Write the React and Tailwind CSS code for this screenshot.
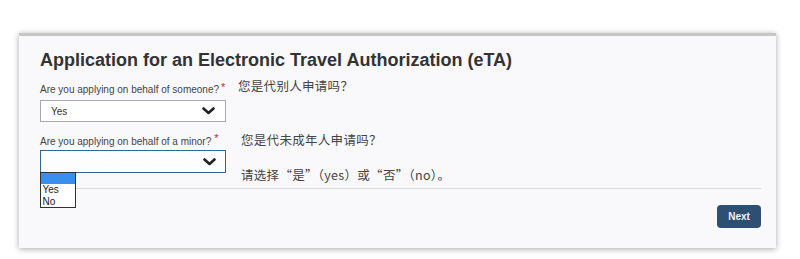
import React from 'react'

const Chevron = () => (
  <svg width="13" height="8" viewBox="0 0 13 8" className="shrink-0">
    <polyline points="1.5,1.5 6.5,6 11.5,1.5" fill="none" stroke="#222" strokeWidth="2.6" strokeLinecap="round" strokeLinejoin="round" />
  </svg>
)

const cn = { fontFamily: '"Noto Sans CJK SC", "Liberation Sans", sans-serif' }

const App = () => {
  return (
    <div className="w-[800px] h-[259px] bg-white overflow-hidden pt-[33px] pl-[19px]" style={{ fontFamily: '"Liberation Sans", Arial, sans-serif' }}>
      <div className="w-[757px] h-[215px] bg-[#f9f8fb] border-t-[3px] border-[#c6c6c6] shadow-[0_1px_6px_rgba(0,0,0,0.35)] pl-[21px] pr-[15px] pt-[12px]">
        <h1 className="text-[18px] leading-[24px] font-bold text-[#333]">
          Application for an Electronic Travel Authorization (eTA)
        </h1>

        <div className="flex mt-[6px]">
          <div className="w-[198px]">
            <div className="h-[18px] flex items-end text-[10px] text-[#444] leading-[12px]">
              Are you applying on behalf of someone?
              <span className="text-[#d0213a] text-[11px] ml-[2px] -translate-y-[3px]">*</span>
            </div>
            <div className="mt-[4px] w-[186px] h-[22px] bg-white border border-[#a9a9a9] flex items-center justify-between pl-[10px] pr-[10px]">
              <span className="text-[10px] text-[#333]">Yes</span>
              <Chevron />
            </div>
          </div>
          <div className="text-[12.5px] text-[#444] leading-[16px] tracking-[0.3px]" style={cn}>
            您是代别人申请吗？
          </div>
        </div>

        <div className="flex mt-[10px]">
          <div className="w-[201px]">
            <div className="h-[16px] flex items-end text-[10px] text-[#444] leading-[12px]">
              Are you applying on behalf of a minor?
              <span className="text-[#d0213a] text-[11px] ml-[3px] -translate-y-[4px]">*</span>
            </div>
            <div className="relative mt-[2px] w-[186px] h-[23px] bg-[#fbfdfe] border-[1.5px] border-[#356688] flex items-center justify-end pr-[9px]">
              <Chevron />
              <div className="absolute left-[-1.5px] top-[21px] w-[36px] bg-white border border-[#333] z-10">
                <div className="h-[11px] bg-[#3990ec]"></div>
                <div className="text-[10px] leading-[12px] text-[#222] pl-[2px]">Yes</div>
                <div className="text-[10px] leading-[11px] text-[#222] pl-[2px]">No</div>
              </div>
            </div>
          </div>
          <div className="text-[12.5px] text-[#444] leading-[16px] tracking-[0.3px]" style={cn}>
            <div>您是代未成年人申请吗？</div>
            <div className="mt-[19px]">请选择“是”（yes）或“否”（no）。</div>
          </div>
        </div>

        <div className="mt-[5px] border-t border-[#d9d9dc]"></div>

        <div className="flex justify-end mt-[16px]">
          <button className="w-[44px] h-[23px] rounded-[4px] bg-[#2e4f71] text-[#eef2f7] text-[10px] font-bold">
            Next
          </button>
        </div>
      </div>
    </div>
  )
}

export default App
